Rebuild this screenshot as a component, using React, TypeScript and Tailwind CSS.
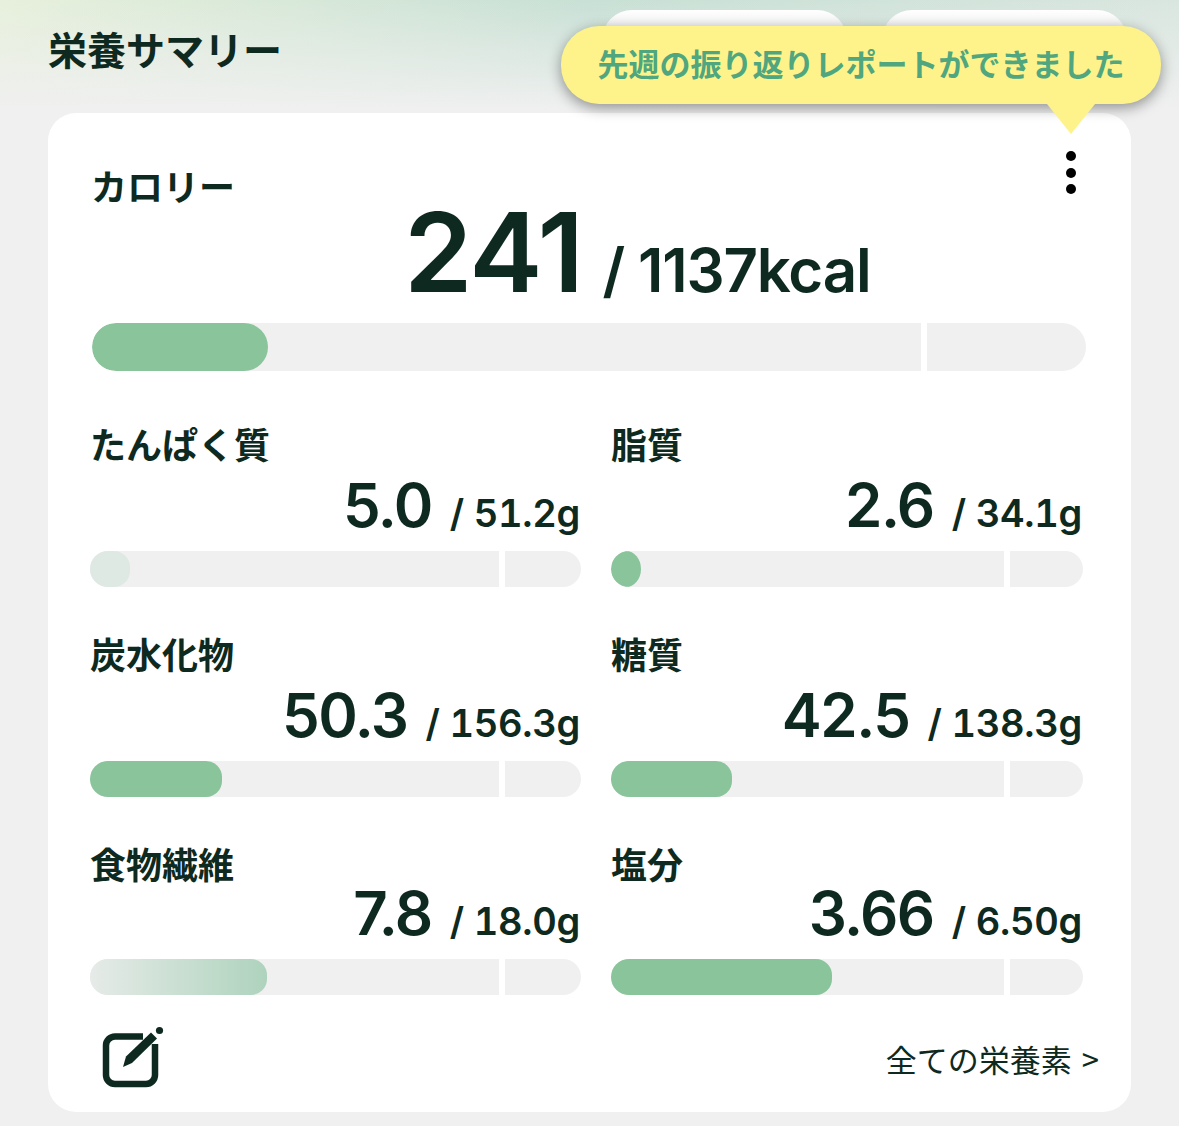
import React from 'react';

const cjk = { fontFamily: '"Noto Sans CJK JP", sans-serif' };
const num = { fontFamily: 'Inter, "Noto Sans", sans-serif' };

interface Nutrient {
    label: string;
    value: string;
    goal: string;
    fill: string;
    width: number;
    last?: boolean;
}

const nutrients: Nutrient[] = [
    { label: 'たんぱく質', value: '5.0', goal: '51.2g', fill: 'bg-[#dfe9e3] rounded-[16px]', width: 40 },
    { label: '脂質', value: '2.6', goal: '34.1g', fill: 'bg-[#8ac49b] rounded-[50%]', width: 30 },
    { label: '炭水化物', value: '50.3', goal: '156.3g', fill: 'bg-[#8ac49b] rounded-[16px]', width: 132 },
    { label: '糖質', value: '42.5', goal: '138.3g', fill: 'bg-[#8ac49b] rounded-[16px]', width: 121 },
    { label: '食物繊維', value: '7.8', goal: '18.0g', fill: 'bg-gradient-to-r from-[#e6ebe8] to-[#aed3bd] rounded-[16px]', width: 177, last: true },
    { label: '塩分', value: '3.66', goal: '6.50g', fill: 'bg-[#8ac49b] rounded-[16px]', width: 221, last: true },
];

const NutrientCell: React.FC<{ item: Nutrient; index: number }> = ({ item, index }) => {
    const tail = index % 2 === 0 ? 'w-[76px]' : 'w-[73px]';
    return (
        <div className={`flex flex-col ${item.last ? 'h-[156px]' : 'h-[210px]'}`}>
            <div className="text-[36px] leading-[50px] -mt-[1px] mb-[1px] font-bold text-[#0e2a20]" style={cjk}>{item.label}</div>
            <div className={`flex justify-end items-baseline pr-[1px] text-[#0e2a20] ${item.last ? 'h-[60px]' : 'h-[71px]'}`} style={num}>
                <span className={`text-[60px] font-semibold tracking-[-1.5px] ${item.last ? 'leading-[48px]' : 'leading-[72px]'}`}>{item.value}</span>
                <span className="text-[38px] font-semibold tabular-nums tracking-[-0.3px] ml-[18px]">/ {item.goal}</span>
            </div>
            <div className={`flex h-[36px] gap-[6px] ${item.last ? 'mt-[10px]' : 'mt-[11px]'}`}>
                <div className="flex-1 bg-[#f0f0f0] rounded-l-[18px] overflow-hidden">
                    <div className={`h-full ${item.fill}`} style={{ width: item.width }} />
                </div>
                <div className={`${tail} bg-[#f0f0f0] rounded-r-[18px]`} />
            </div>
        </div>
    );
};

export default function App() {
    return (
        <div className="relative w-[1179px] h-[1126px] overflow-hidden bg-[#f0f0f0] bg-[linear-gradient(to_bottom,rgba(240,240,240,0)_0px,#f0f0f0_112px),linear-gradient(to_right,#e7f0dc,#c8e0d5_50%,#d9e6df)]">
            {/* tabs sitting behind the balloon */}
            <div className="absolute left-[602px] top-[10px] w-[245px] h-[60px] rounded-t-[30px] bg-gradient-to-b from-white to-[#d0d0d0]" />
            <div className="absolute left-[882px] top-[10px] w-[245px] h-[60px] rounded-t-[30px] bg-gradient-to-b from-white to-[#d0d0d0]" />

            {/* balloon */}
            <div className="absolute left-[561px] top-[26px] z-10 flex flex-col items-end">
                <div
                    className="w-[600px] h-[78px] pb-[4px] rounded-[38px] bg-[#fdf38a] shadow-[0_4px_14px_rgba(0,0,0,0.4)] flex items-center justify-center text-[31px] font-bold text-[#4fa67f]"
                    style={cjk}
                >
                    先週の振り返りレポートができました
                </div>
                <div className="w-0 h-0 mr-[66px] border-x-[24px] border-t-[30px] border-x-transparent border-t-[#fdf38a]" />
            </div>

            <div className="px-[48px]">
                <h1 className="h-[113px] pt-[20px] text-[39px] leading-[56px] font-bold text-[#0e2a20]" style={cjk}>
                    栄養サマリー
                </h1>

                <div className="w-[1083px] h-[999px] bg-white rounded-[28px] px-[42px]">
                    {/* calories */}
                    <div className="flex h-[210px]">
                        <div className="w-[314px] pt-[46px] pl-[1px] text-[36px] leading-[52px] font-bold text-[#0e2a20]" style={cjk}>カロリー</div>
                        <div className="flex items-baseline h-[190px] pt-[87px] text-[#0e2a20]" style={num}>
                            <span className="text-[110px] leading-[104px] font-semibold tracking-[-1.5px]">241</span>
                            <span className="text-[60px] leading-[60px] font-semibold ml-[20px] tracking-[-1.2px]">/ 1137kcal</span>
                        </div>
                        <div className="ml-auto mr-[13px] pt-[38px] flex flex-col gap-[6.5px]">
                            <span className="w-[10px] h-[10px] rounded-full bg-black" />
                            <span className="w-[10px] h-[10px] rounded-full bg-black" />
                            <span className="w-[10px] h-[10px] rounded-full bg-black" />
                        </div>
                    </div>
                    <div className="flex h-[48px] ml-[2px] w-[994px] gap-[6px]">
                        <div className="flex-1 bg-[#f0f0f0] rounded-l-[24px] overflow-hidden">
                            <div className="h-full w-[176px] bg-[#8ac49b] rounded-[24px]" />
                        </div>
                        <div className="w-[159px] bg-[#f0f0f0] rounded-r-[24px]" />
                    </div>

                    {/* nutrients */}
                    <div className="grid grid-cols-[491px_472px] gap-x-[30px] mt-[48px]">
                        {nutrients.map((n, i) => (
                            <NutrientCell key={n.label} item={n} index={i} />
                        ))}
                    </div>

                    {/* footer */}
                    <div className="flex items-center justify-between mt-[31px] -mr-[10px]">
                        <svg width="64" height="64" viewBox="0 0 64 64" className="ml-[10px]" fill="none">
                            <path d="M43 10.5H15a9 9 0 0 0-9 9V49a9 9 0 0 0 9 9H46a9 9 0 0 0 9-9V18" stroke="#0e2a20" strokeWidth="6.5" />
                            <path d="M23 41 L26 30.5 L51 6.5 L57 12.5 L32 37 Z" fill="#0e2a20" />
                            <circle cx="59.5" cy="4.5" r="3.6" fill="#0e2a20" />
                        </svg>
                        <div className="flex gap-[10px] mt-[3px] text-[31px] text-[#0e2a20]" style={cjk}>
                            <span>全ての栄養素</span>
                            <span>&gt;</span>
                        </div>
                    </div>
                </div>
            </div>
        </div>
    );
}
